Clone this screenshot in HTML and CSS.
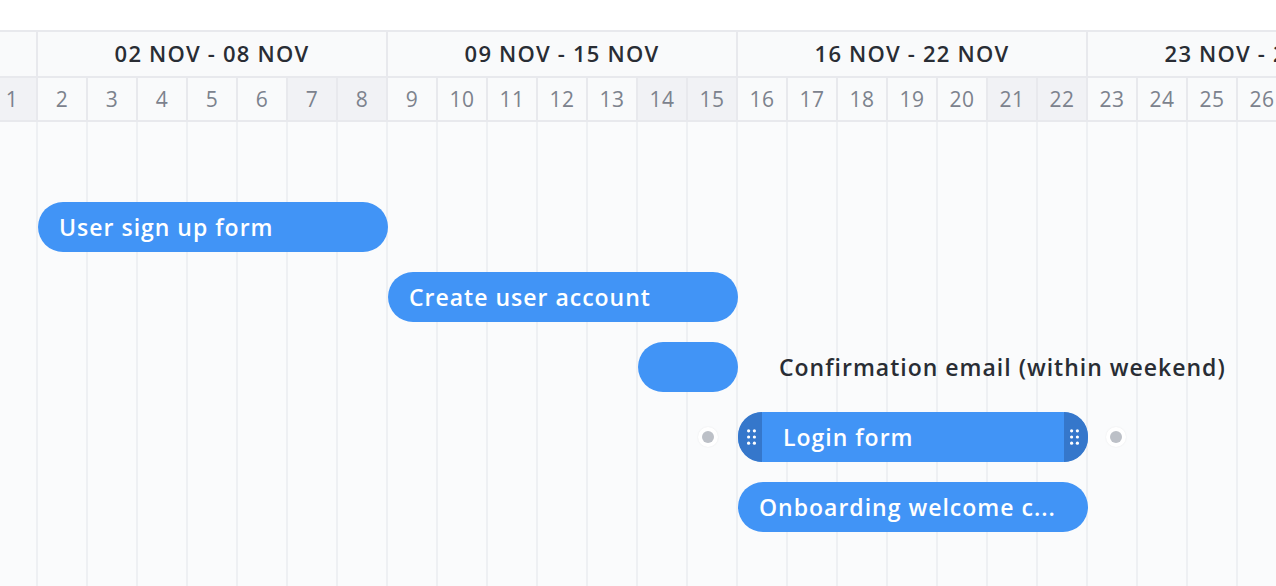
FILE: index.html
```html
<!DOCTYPE html>
<html lang="en">
<head>
    <meta charset="UTF-8">
    <meta name="viewport" content="width=device-width, initial-scale=1.0">
    <title>Gantt Timeline</title>
    <link rel="stylesheet" href="styles.css">
</head>
<body>
    <div class="gantt">
        <div class="timeline-header">
            <div class="weeks">
                <div class="week week-partial"></div>
                <div class="week">02 NOV - 08 NOV</div>
                <div class="week">09 NOV - 15 NOV</div>
                <div class="week">16 NOV - 22 NOV</div>
                <div class="week">23 NOV - 29 NOV</div>
            </div>
            <div class="days">
                <div class="day weekend">1</div>
                <div class="day">2</div>
                <div class="day">3</div>
                <div class="day">4</div>
                <div class="day">5</div>
                <div class="day">6</div>
                <div class="day weekend">7</div>
                <div class="day weekend">8</div>
                <div class="day">9</div>
                <div class="day">10</div>
                <div class="day">11</div>
                <div class="day">12</div>
                <div class="day">13</div>
                <div class="day weekend">14</div>
                <div class="day weekend">15</div>
                <div class="day">16</div>
                <div class="day">17</div>
                <div class="day">18</div>
                <div class="day">19</div>
                <div class="day">20</div>
                <div class="day weekend">21</div>
                <div class="day weekend">22</div>
                <div class="day">23</div>
                <div class="day">24</div>
                <div class="day">25</div>
                <div class="day">26</div>
                <div class="day">27</div>
            </div>
        </div>

        <div class="timeline-body">
            <div class="task task-signup">User sign up form</div>
            <div class="task task-account">Create user account</div>
            <div class="task task-confirm"></div>
            <div class="task-label">Confirmation email (within weekend)</div>
            <div class="task task-login selected">
                <span class="link-dot link-dot-left"></span>
                <span class="handle handle-left">
                    <svg width="9" height="16" viewBox="0 0 9 16"><g fill="#fff"><circle cx="1.6" cy="1.8" r="1.6"/><circle cx="7.4" cy="1.8" r="1.6"/><circle cx="1.6" cy="8" r="1.6"/><circle cx="7.4" cy="8" r="1.6"/><circle cx="1.6" cy="14.2" r="1.6"/><circle cx="7.4" cy="14.2" r="1.6"/></g></svg>
                </span>
                <span class="task-name">Login form</span>
                <span class="handle handle-right">
                    <svg width="9" height="16" viewBox="0 0 9 16"><g fill="#fff"><circle cx="1.6" cy="1.8" r="1.6"/><circle cx="7.4" cy="1.8" r="1.6"/><circle cx="1.6" cy="8" r="1.6"/><circle cx="7.4" cy="8" r="1.6"/><circle cx="1.6" cy="14.2" r="1.6"/><circle cx="7.4" cy="14.2" r="1.6"/></g></svg>
                </span>
                <span class="link-dot link-dot-right"></span>
            </div>
            <div class="task task-onboarding">Onboarding welcome c...</div>
        </div>
    </div>
</body>
</html>
```

FILE: styles.css
```css
* {
    margin: 0;
    padding: 0;
    box-sizing: border-box;
}

body {
    font-family: 'Open Sans', 'Noto Sans', sans-serif;
    background: #fff;
    overflow: hidden;
    height: 586px;
}

.gantt {
    margin-top: 30px;
    margin-left: -12px;
    width: 1350px;
}

.timeline-header {
    border-top: 2px solid #e8e9ed;
}

.weeks,
.days {
    display: flex;
    border-bottom: 2px solid #e8e9ed;
    background: #f9fafb;
}

.week {
    flex: 0 0 350px;
    height: 44px;
    display: flex;
    align-items: center;
    justify-content: center;
    border-right: 2px solid #e8e9ed;
    font-size: 22px;
    font-weight: 600;
    color: #292d34;
    letter-spacing: 1.2px;
    white-space: nowrap;
    padding-bottom: 3px;
}

.week-partial {
    flex-basis: 50px;
}

.day {
    flex: 0 0 50px;
    height: 42px;
    display: flex;
    align-items: center;
    justify-content: center;
    border-right: 2px solid #e8e9ed;
    font-size: 21px;
    font-weight: 500;
    color: #7c828d;
    letter-spacing: 0.5px;
}

.day.weekend {
    background: #f1f2f5;
}

.timeline-body {
    display: grid;
    grid-template-columns: repeat(27, 50px);
    grid-auto-rows: 50px;
    row-gap: 20px;
    padding-top: 80px;
    height: 466px;
    background-color: #fafbfc;
    background-image: repeating-linear-gradient(to right, transparent 0 48px, #eef0f3 48px 50px);
}

.task {
    position: relative;
    display: flex;
    align-items: center;
    height: 50px;
    padding: 0 21px;
    border-radius: 25px;
    background: #4194f6;
    color: #fff;
    font-size: 23px;
    font-weight: 600;
    letter-spacing: 1px;
    white-space: nowrap;
}

.task-signup { grid-row: 1; grid-column: 2 / 9; }
.task-account { grid-row: 2; grid-column: 9 / 16; }
.task-confirm { grid-row: 3; grid-column: 14 / 16; }
.task-login { grid-row: 4; grid-column: 16 / 23; }
.task-onboarding { grid-row: 5; grid-column: 16 / 23; }

.task-label {
    grid-row: 3;
    grid-column: 16 / 28;
    align-self: center;
    padding-left: 41px;
    font-size: 23px;
    font-weight: 600;
    letter-spacing: 1px;
    color: #292d34;
    white-space: nowrap;
}

.task.selected {
    padding: 0;
}

.handle {
    display: flex;
    align-items: center;
    justify-content: center;
    height: 50px;
    background: #3577cb;
    flex: 0 0 24px;
}

.handle-left {
    border-radius: 25px 0 0 25px;
    padding-left: 3px;
}

.handle-right {
    border-radius: 0 25px 25px 0;
    padding-right: 3px;
}

.task-name {
    flex: 1;
    padding-left: 21px;
}

.link-dot {
    position: absolute;
    top: 15px;
    width: 20px;
    height: 20px;
    border-radius: 50%;
    background: #fff;
    border: 4px solid #fff;
    box-shadow: 0 0 2px rgba(0, 0, 0, 0.08);
}

.link-dot::after {
    content: '';
    display: block;
    width: 12px;
    height: 12px;
    border-radius: 50%;
    background: #bcc0c7;
}

.link-dot-left { left: -40px; }
.link-dot-right { right: -38px; }
```
